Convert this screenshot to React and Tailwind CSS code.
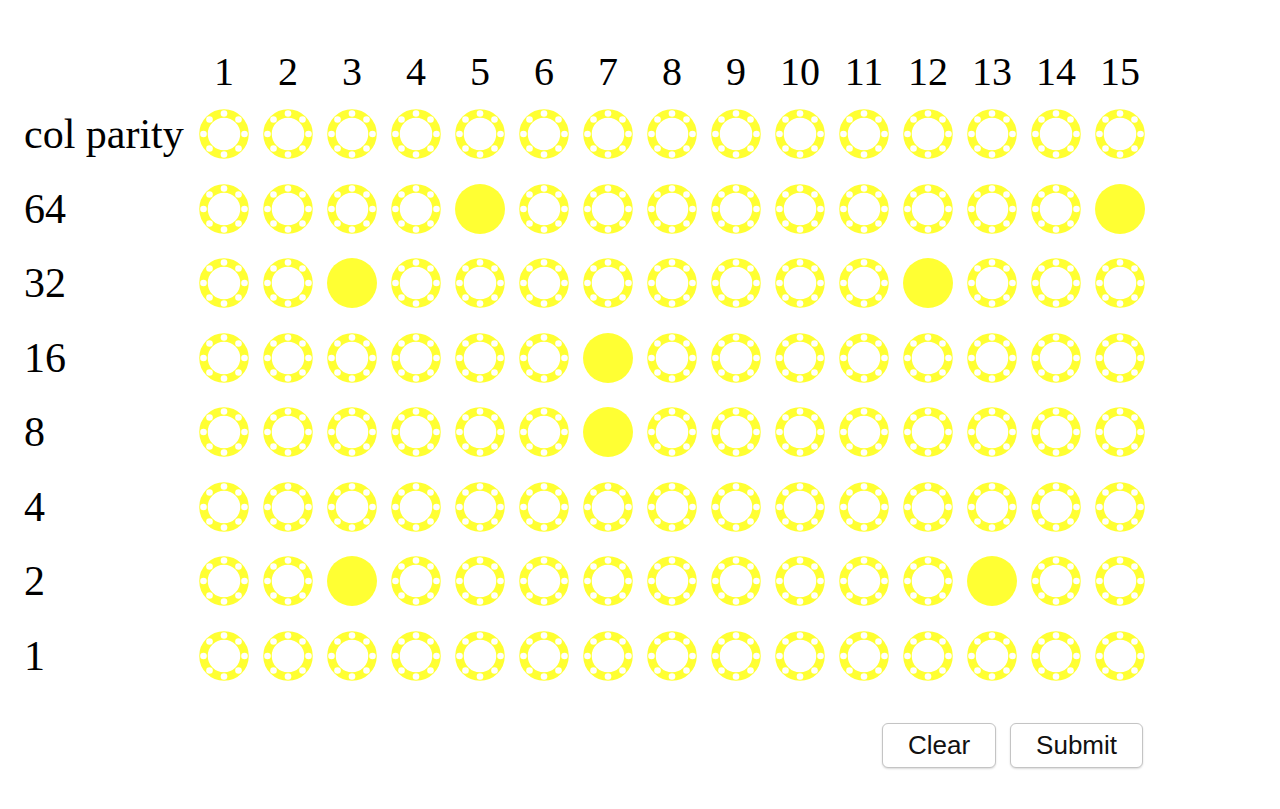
import React from 'react';

const rows = ['col parity', '64', '32', '16', '8', '4', '2', '1'];
const cols = Array.from({ length: 15 }, (_, i) => i + 1);

// row label -> filled column numbers
const filled = {
  '64': [5, 15],
  '32': [3, 12],
  '16': [7],
  '8': [7],
  '2': [3, 13],
};

const holes = Array.from({ length: 8 }, (_, i) => {
  const a = (i * Math.PI) / 4 - Math.PI / 2;
  return { x: 25 + 20.5 * Math.cos(a), y: 25 + 20.5 * Math.sin(a) };
});

const Bit = ({ on }) => (
  <svg width="50" height="50" viewBox="0 0 50 50" className="block">
    <defs>
      <filter id="soft" x="-10%" y="-10%" width="120%" height="120%">
        <feGaussianBlur stdDeviation="0.6" />
      </filter>
    </defs>
    {on ? (
      <circle cx="25" cy="25" r="25" fill="#ffff33" />
    ) : (
      <g filter="url(#soft)">
        <circle cx="25" cy="25" r="20.5" fill="none" stroke="#ffff33" strokeWidth="8.5" />
        {holes.map((h, i) => (
          <circle key={i} cx={h.x} cy={h.y} r="3.3" fill="#ffffff" />
        ))}
      </g>
    )}
  </svg>
);

const App = () => {
  return (
    <div className="min-h-screen bg-white pt-[47px] pl-6" style={{ fontFamily: '"Liberation Serif", "Times New Roman", serif' }}>
      <div className="grid grid-cols-[168px_repeat(15,64px)] text-[40px] leading-none text-black">
        <div className="h-[50px]" />
        {cols.map((c) => (
          <div key={c} className="h-[50px] flex items-center justify-center">
            {c}
          </div>
        ))}
        {rows.map((r) => (
          <React.Fragment key={r}>
            <div className="h-[74.5px] flex items-center whitespace-nowrap text-[42px]">{r}</div>
            {cols.map((c) => (
              <div key={c} className="h-[74.5px] flex items-center justify-center">
                <Bit on={(filled[r] || []).includes(c)} />
              </div>
            ))}
          </React.Fragment>
        ))}
      </div>
      <div className="w-[1119px] flex justify-end gap-[14px] mt-[30px]" style={{ fontFamily: '"Liberation Sans", Arial, sans-serif' }}>
        <button className="h-[45px] px-[25px] text-[26px] text-[#111] bg-white border border-[#c4c4c4] rounded-[6px] shadow-[0_1px_2px_rgba(0,0,0,0.15)]">
          Clear
        </button>
        <button className="h-[45px] px-[25px] text-[26px] text-[#111] bg-white border border-[#c4c4c4] rounded-[6px] shadow-[0_1px_2px_rgba(0,0,0,0.15)]">
          Submit
        </button>
      </div>
    </div>
  );
};

export default App;
